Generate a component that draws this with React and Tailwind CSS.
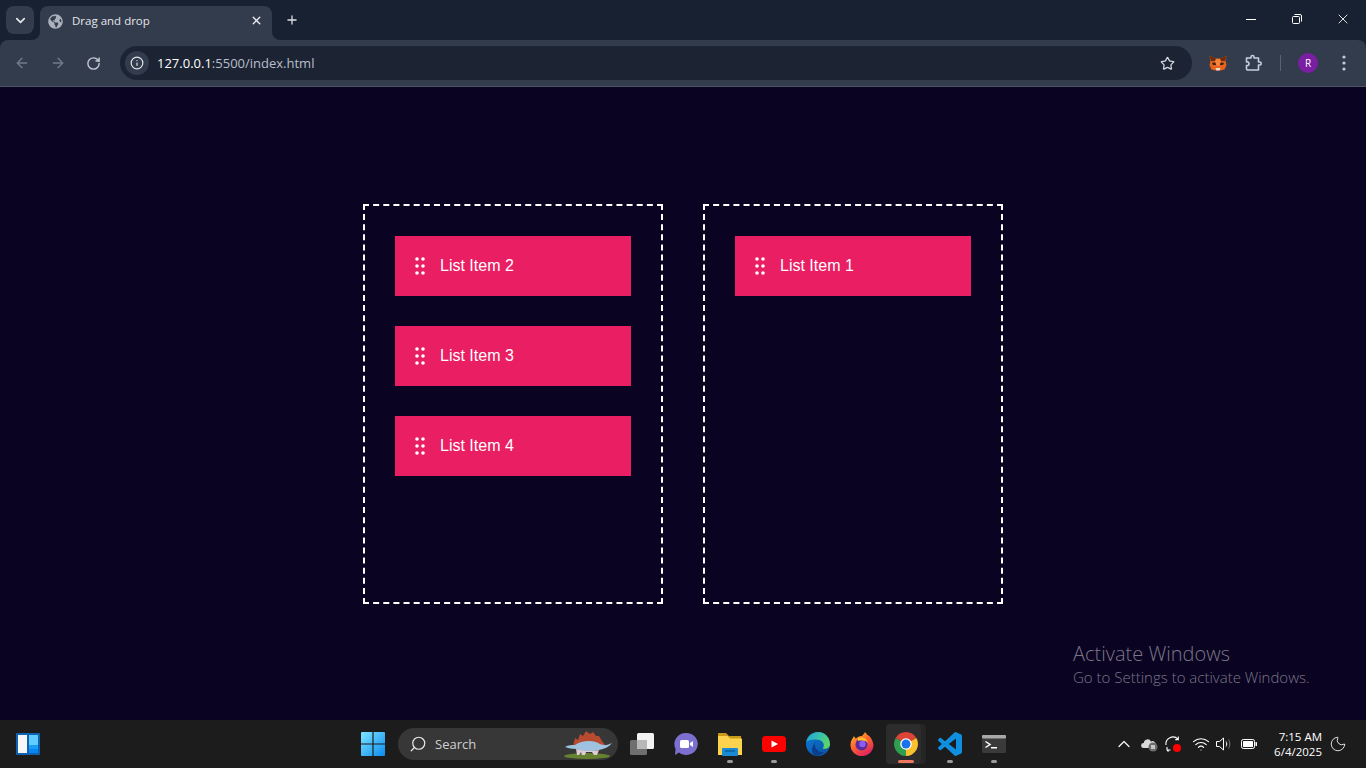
import React from "react";
import { ArrowLeft, ArrowRight, RotateCw, Info, Star, Plus, X, ChevronDown, ChevronUp, Search, Wifi, Moon } from "lucide-react";
import { FaGlobeAmericas } from "react-icons/fa";

const ui = "font-['Open_Sans','Noto_Sans',sans-serif]";

function Grip() {
  return (
    <svg width="10" height="18" viewBox="0 0 10 18" className="shrink-0" fill="#fff">
      {[2, 8].map((x) => [2, 9, 16].map((y) => <circle key={x + "-" + y} cx={x} cy={y} r="1.8" />))}
    </svg>
  );
}

function Item({ label }) {
  return (
    <div className="h-[60px] w-[236px] bg-[#e91e63] flex items-center pl-5 gap-[15px] text-white text-base font-['Liberation_Sans',Arial,sans-serif]">
      <Grip />
      <span>{label}</span>
    </div>
  );
}

function Box({ items }) {
  return (
    <div className="w-[300px] h-[400px] border-2 border-dashed border-white p-[30px] flex flex-col gap-[30px]">
      {items.map((t) => <Item key={t} label={t} />)}
    </div>
  );
}

function Fox() {
  return (
    <svg width="18" height="16" viewBox="0 0 18 16">
      <path d="M0.5 1 L7 3.5 H11 L17.5 1 L16.5 6 L17.5 10 L15.5 14.5 L11.5 15.5 H6.5 L2.5 14.5 L0.5 10 L1.5 6 Z" fill="#e8621c" />
      <path d="M0.5 1 L7 3.5 L6 6 L2 6 Z M17.5 1 L11 3.5 L12 6 L16 6 Z" fill="#6b2c12" />
      <path d="M3 8 L7 7 L7 10 L4 10 Z M15 8 L11 7 L11 10 L14 10 Z" fill="#3a2418" />
      <path d="M7 4 H11 L12 7 L10 11 H8 L6 7 Z" fill="#f5843a" />
      <path d="M6.5 13 H11.5 L10.5 15.5 H7.5 Z" fill="#e8dcd2" />
    </svg>
  );
}

function PuzzleIcon() {
  return (
    <svg width="18" height="18" viewBox="0 0 18 18" fill="none" stroke="#c5cedd" strokeWidth="1.6" strokeLinejoin="round">
      <path d="M1.5 4 H6 V3 A1.5 1.5 0 0 1 9 3 V4 H13.5 V8 H14.7 A1.5 1.5 0 0 1 14.7 11 H13.5 V16 H2.5 A1 1 0 0 1 1.5 15 V11.5 H3 A2 2 0 0 0 3 8 H1.5 Z" />
    </svg>
  );
}

function Restore() {
  return (
    <svg width="10" height="10" viewBox="0 0 10 10" fill="none" stroke="#fff" strokeWidth="1">
      <rect x="0.5" y="2.5" width="7" height="7" rx="1" />
      <path d="M2.5 0.5 H8 A1.5 1.5 0 0 1 9.5 2 V7.5" />
    </svg>
  );
}

function TabStrip() {
  return (
    <div className="h-10 bg-[#182131] flex items-start text-white relative">
      <div className="ml-[6px] mt-[6px] w-7 h-7 rounded-lg bg-[#333c4c] flex items-center justify-center">
        <ChevronDown size={15} strokeWidth={2.6} color="#e4e8ef" />
      </div>
      <div className={`relative ml-[6px] mt-[6px] w-[232px] h-[34px] bg-[#333c4c] rounded-t-lg flex items-center pl-[8px] pr-2 ${ui}`}>
        <svg width="8" height="8" viewBox="0 0 8 8" className="absolute -left-2 bottom-0"><path d="M8 0 V8 H0 A8 8 0 0 0 8 0 Z" fill="#333c4c" /></svg>
        <svg width="8" height="8" viewBox="0 0 8 8" className="absolute -right-2 bottom-0"><path d="M0 0 V8 H8 A8 8 0 0 1 0 0 Z" fill="#333c4c" /></svg>
        <FaGlobeAmericas size={15} color="#aab1bd" className="shrink-0 -mt-[4px]" />
        <span className="ml-[9px] text-[11.5px] text-[#e3e6eb] leading-none -mt-[4px]">Drag and drop</span>
        <X size={13} strokeWidth={2.6} color="#e8ebf0" className="ml-auto mr-[1px] -mt-[5px]" />
      </div>
      <div className="ml-[13px] mt-[13px]">
        <Plus size={14} strokeWidth={2.2} color="#dde1e8" />
      </div>
      <div className="ml-auto flex items-center h-10 -mt-[1px]">
        <div className="w-[46px] flex justify-center"><div className="w-[10px] h-px bg-white" /></div>
        <div className="w-[46px] flex justify-center"><Restore /></div>
        <div className="w-[46px] flex justify-center"><X size={16} strokeWidth={1.3} color="#fff" /></div>
      </div>
    </div>
  );
}

function Toolbar() {
  return (
    <div className="h-[47px] bg-[#182131]">
      <div className="h-[46px] bg-[#333c4c] rounded-t-lg flex items-center">
        <ArrowLeft size={16} strokeWidth={2} color="#737b89" className="ml-[14px]" />
        <ArrowRight size={16} strokeWidth={2} color="#737b89" className="ml-[20px]" />
        <RotateCw size={15} strokeWidth={2.2} color="#c5cad3" className="ml-[20px]" />
        <div className="ml-[19px] w-[1072px] h-[34px] rounded-full bg-[#1c2434] flex items-center pl-[5px] pr-[17px]">
          <div className="w-6 h-6 rounded-full bg-[#333c4c] flex items-center justify-center">
            <Info size={14} strokeWidth={2} color="#e3e6eb" />
          </div>
          <span className={`ml-2 text-[13px] leading-none ${ui}`}>
            <span className="text-white">127.0.0.1</span>
            <span className="text-[#b9bfca]">:5500/index.html</span>
          </span>
          <Star size={15} strokeWidth={2} color="#d5d9e0" className="ml-auto" />
        </div>
        <div className="ml-[17px]"><Fox /></div>
        <div className="ml-[18px]"><PuzzleIcon /></div>
        <div className="ml-[17px] w-px h-[16px] bg-[#5a6270]" />
        <div className={`ml-[17px] w-5 h-5 rounded-full bg-[#7b1fa2] flex items-center justify-center text-[10px] text-white ${ui}`}>R</div>
        <svg width="4" height="16" viewBox="0 0 4 16" fill="#c5cad3" className="ml-[24px]">
          <circle cx="2" cy="2" r="1.6" /><circle cx="2" cy="8" r="1.6" /><circle cx="2" cy="14" r="1.6" />
        </svg>
      </div>
      <div className="h-px bg-[#4d5463]" />
    </div>
  );
}

function Widgets() {
  return (
    <svg width="24" height="22" viewBox="0 0 24 22">
      <rect width="24" height="22" rx="1" fill="#0f62b0" />
      <rect x="2" y="2" width="9" height="18" fill="#f6f6f6" />
      <rect x="13" y="2" width="9" height="10" fill="#60cdff" />
      <rect x="13" y="12" width="9" height="4" fill="#1b9cf4" />
      <rect x="13" y="16" width="9" height="4" fill="#0a84f0" />
    </svg>
  );
}

function Start() {
  return (
    <svg width="24" height="24" viewBox="0 0 24 24">
      <defs>
        <linearGradient id="st" x1="0" y1="0" x2="1" y2="1">
          <stop offset="0" stopColor="#7fe4ff" /><stop offset="1" stopColor="#0a8cf0" />
        </linearGradient>
      </defs>
      <path d="M0 1 A1 1 0 0 1 1 0 H11.4 V11.4 H0 Z M12.6 0 H23 A1 1 0 0 1 24 1 V11.4 H12.6 Z M0 12.6 H11.4 V24 H1 A1 1 0 0 1 0 23 Z M12.6 12.6 H24 V23 A1 1 0 0 1 23 24 H12.6 Z" fill="url(#st)" />
    </svg>
  );
}

function Stego() {
  return (
    <svg width="52" height="30" viewBox="0 0 52 30">
      <ellipse cx="25" cy="26" rx="23" ry="3" fill="#66812f" />
      <path d="M11 16 L13 8 L16 10 L18 4 L21 6 L24 1 L28 4 L31 2 L34 6 L37 6 L40 11 L43 15 Z" fill="#b84a30" />
      <path d="M3 17 C6 15 10 15 13 15 C20 10 32 10 38 14 C42 16 46 15 50 13 C47 17 42 19 37 20 C30 22 20 22 14 19 C10 19 6 18 3 17 Z" fill="#9fc3de" />
      <path d="M14 19 C20 21 30 22 37 20 L35 25 H32 L30 22 H24 L23 25 H20 L19 22 L17 25 H15 Z" fill="#dfccd6" />
    </svg>
  );
}

function TaskView() {
  return (
    <svg width="24" height="22" viewBox="0 0 24 22">
      <rect x="0" y="7" width="17" height="15" rx="1.5" fill="#6f6f6f" />
      <rect x="7" y="0" width="17" height="16" rx="1.5" fill="#f2f2f2" />
      <rect x="7" y="7" width="10" height="9" fill="#b8b8b8" />
    </svg>
  );
}

function Meet() {
  return (
    <svg width="24" height="24" viewBox="0 0 24 24">
      <path d="M12 1 A11.5 11 0 1 1 5 20.5 L1 23 L1.6 17 A11.5 11 0 0 1 12 1 Z" fill="#7b6fd0" />
      <rect x="6" y="8" width="9" height="8" rx="1.5" fill="#fff" />
      <path d="M16 11 L19 9 V15 L16 13 Z" fill="#fff" />
    </svg>
  );
}

function Explorer() {
  return (
    <svg width="24" height="24" viewBox="0 0 24 24">
      <path d="M0 1.5 A1 1 0 0 1 1 1 H8 L11 4 H23 V8 H0 Z" fill="#c99a1a" />
      <path d="M0 4 H9.5 L12 6.5 H24 V23 H0 Z" fill="#fcd34d" />
      <rect x="4" y="16" width="16" height="8" rx="1" fill="#1a8ad4" />
      <rect x="7" y="18" width="10" height="2" fill="#0e6aa8" />
    </svg>
  );
}

function YouTube() {
  return (
    <svg width="24" height="16" viewBox="0 0 24 16">
      <rect width="24" height="16" rx="3.5" fill="#f00" />
      <path d="M9.5 4.5 L16 8 L9.5 11.5 Z" fill="#fff" />
    </svg>
  );
}

function Edge() {
  return (
    <svg width="24" height="24" viewBox="0 0 24 24">
      <defs>
        <linearGradient id="eg" x1="0" y1="0" x2="1" y2="0.4">
          <stop offset="0" stopColor="#1fa2d8" /><stop offset="0.55" stopColor="#35c1b0" /><stop offset="1" stopColor="#5ad36c" />
        </linearGradient>
        <linearGradient id="eb" x1="0" y1="0" x2="1" y2="1">
          <stop offset="0" stopColor="#0c7cd5" /><stop offset="1" stopColor="#0b4fa0" />
        </linearGradient>
      </defs>
      <circle cx="12" cy="12" r="12" fill="url(#eb)" />
      <path d="M0.3 10 C1.5 3.5 7 0 12 0 C19 0 24 5.5 24 12.5 C24 16 20 17.5 16.5 16.5 C19 14.5 18 9 13 8 C7 7 2.5 8 0.3 10 Z" fill="url(#eg)" />
      <path d="M9 12 C8.5 17 12.5 20.5 18 20 C15 23 11 24 8.5 23 C5 20.5 5.5 14 9 12 Z" fill="#0a3d8a" />
      <path d="M12 8.5 C9 9.5 7 13 9 18 C6.5 15 7.5 10 12 8.5 Z" fill="#0a3d8a" />
    </svg>
  );
}

function Firefox() {
  return (
    <svg width="24" height="24" viewBox="0 0 24 24">
      <defs>
        <linearGradient id="ff" x1="0" y1="0" x2="0.6" y2="1">
          <stop offset="0" stopColor="#ffbd2e" /><stop offset="0.5" stopColor="#ff6a2b" /><stop offset="1" stopColor="#e0245e" />
        </linearGradient>
      </defs>
      <path d="M4 4 C4.5 5 5 6 6 6.5 C8 4.5 10 4 12 4 C13 2.5 14.5 1.5 15 0 C16 1 16.5 2 17.5 3 C20 4 23 8 23.5 13 A11.5 11 0 1 1 0.7 11 C1 8 3 6 4 4 Z" fill="url(#ff)" />
      <circle cx="11.5" cy="12.5" r="6" fill="#5b2a9e" />
      <circle cx="12.5" cy="12" r="3.2" fill="#8b5cf6" />
      <path d="M8 6 C12 4.5 17 6 18 11 C16 8.5 12 8 8 9 Z" fill="#ffbd2e" />
    </svg>
  );
}

function Chrome() {
  return (
    <svg width="24" height="24" viewBox="0 0 24 24" className="relative">
      <path d="M12 12 L1.61 6 A12 12 0 0 1 22.39 6 Z" fill="#db4437" />
      <path d="M12 12 L22.39 6 A12 12 0 0 1 12 24 Z" fill="#fbc02d" />
      <path d="M12 12 L12 24 A12 12 0 0 1 1.61 6 Z" fill="#2e9e4f" />
      <circle cx="12" cy="12" r="5.8" fill="#fff" />
      <circle cx="12" cy="12" r="4.5" fill="#1a73e8" />
    </svg>
  );
}

function VSCode() {
  return (
    <svg width="24" height="24" viewBox="0 0 24 24">
      <path d="M23.15 2.587L18.21.21a1.494 1.494 0 0 0-1.705.29l-9.46 8.63-4.12-3.128a.999.999 0 0 0-1.276.057L.327 7.261A1 1 0 0 0 .326 8.74L3.899 12 .326 15.26a1 1 0 0 0 .001 1.479L1.65 17.94a.999.999 0 0 0 1.276.057l4.12-3.128 9.46 8.63a1.492 1.492 0 0 0 1.704.29l4.942-2.377A1.5 1.5 0 0 0 24 20.06V3.939a1.5 1.5 0 0 0-.85-1.352zm-5.146 14.861L10.826 12l7.178-5.448v10.896z" fill="#0f8fe0" />
    </svg>
  );
}

function Terminal() {
  return (
    <svg width="24" height="18" viewBox="0 0 24 18">
      <rect width="24" height="18" rx="1.5" fill="#3a3a3a" />
      <rect width="24" height="3.5" rx="1" fill="#a8a8a8" />
      <path d="M3.5 6.5 L8 9.5 L3.5 12.5" fill="none" stroke="#fff" strokeWidth="1.5" />
      <rect x="9" y="12" width="6" height="1.5" fill="#fff" />
    </svg>
  );
}

function Slot({ children, running }) {
  return (
    <div className="relative w-11 h-10 flex items-center justify-center">
      {children}
      {running && <div className="absolute bottom-[1px] left-1/2 -translate-x-1/2 h-[3px] w-[6px] rounded-full bg-[#9b9b9b]" />}
    </div>
  );
}

function Cloud() {
  return (
    <svg width="17" height="15" viewBox="0 0 17 15">
      <path d="M2.5 11 A2.5 2.5 0 0 1 2.8 6 A3.8 3.8 0 0 1 10 4.5 A3 3 0 0 1 13 10 L11 11 Z" fill="#d9d9d9" />
      <circle cx="12" cy="10" r="4.5" fill="#6c6c6c" />
      <rect x="10.4" y="8" width="1.2" height="4" fill="#fff" />
      <rect x="12.4" y="8" width="1.2" height="4" fill="#fff" />
    </svg>
  );
}

function Sync() {
  return (
    <svg width="17" height="17" viewBox="0 0 17 17" fill="none" stroke="#fff" strokeWidth="1.1">
      <path d="M1 9 A7 7 0 0 1 13 3.2" />
      <path d="M13.3 0.6 V3.6 H10.3" />
      <path d="M2 14 L3.5 15.5 M2 14 H5.5 M2 14 V11" />
      <circle cx="12" cy="12" r="4" fill="#f00" stroke="none" />
    </svg>
  );
}

function Volume() {
  return (
    <svg width="16" height="14" viewBox="0 0 16 14" fill="none" stroke="#fff" strokeWidth="1">
      <path d="M0.5 4.5 H3.5 L7.5 1 V13 L3.5 9.5 H0.5 Z" strokeLinejoin="round" />
      <path d="M10 4.5 C11 6 11 8 10 9.5" />
      <path d="M12.5 2.5 C14.3 5 14.3 9 12.5 11.5" stroke="#777" />
    </svg>
  );
}

function Battery() {
  return (
    <svg width="16" height="10" viewBox="0 0 16 10">
      <rect x="0.5" y="0.5" width="13" height="9" rx="1.8" fill="none" stroke="#fff" />
      <rect x="2" y="2" width="10" height="6" rx="0.6" fill="#fff" />
      <rect x="14.5" y="3" width="1.5" height="4" rx="0.6" fill="#fff" />
    </svg>
  );
}

function Taskbar() {
  return (
    <div className={`h-12 bg-[#1c1c1c] flex items-center text-white relative ${ui}`}>
      <div className="ml-4"><Widgets /></div>
      <div className="ml-[321px]"><Start /></div>
      <div className="ml-[13px] w-[220px] h-8 rounded-full bg-[#373737] flex items-center pl-[11px] relative overflow-hidden">
        <Search size={18} strokeWidth={1.6} color="#e8e8e8" className="-scale-x-100" />
        <span className="ml-[8px] text-[13px] text-[#cfcfcf] mt-[1px]">Search</span>
        <div className="absolute right-[4px] bottom-0"><Stego /></div>
      </div>
      <div className="ml-[12px]"><TaskView /></div>
      <div className="ml-[10px] flex items-center">
        <Slot><Meet /></Slot>
        <Slot running><Explorer /></Slot>
        <Slot running><YouTube /></Slot>
        <Slot><Edge /></Slot>
        <Slot><Firefox /></Slot>
        <div className="relative w-11 h-10 flex items-center justify-center">
          <div className="absolute inset-y-0 left-[2px] w-10 rounded bg-[#252525]" />
          <div className="absolute inset-y-0 left-[2px] w-[35px] rounded bg-[#2c2c2c]" />
          <Chrome />
          <div className="absolute bottom-[1px] left-1/2 -translate-x-1/2 h-[3px] w-4 rounded-full bg-[#f0775f]" />
        </div>
        <Slot running><VSCode /></Slot>
        <Slot running><Terminal /></Slot>
      </div>
      <div className="ml-auto flex items-center">
        <ChevronUp size={20} strokeWidth={1.6} color="#f2f2f2" />
        <div className="ml-[7px]"><Cloud /></div>
        <div className="ml-[7px]"><Sync /></div>
        <div className="ml-[10px]"><Wifi size={18} strokeWidth={1.5} color="#fff" /></div>
        <div className="ml-[6px]"><Volume /></div>
        <div className="ml-[9px]"><Battery /></div>
        <div className="ml-[9px] w-[56px] text-right text-[11.5px] leading-[15px] text-white">
          <div>7:15 AM</div>
          <div>6/4/2025</div>
        </div>
        <Moon size={18} strokeWidth={1.2} color="#f2f2f2" className="ml-[7px] mr-[19px]" />
      </div>
    </div>
  );
}

export default function App() {
  return (
    <div className="w-full h-screen flex flex-col overflow-hidden bg-[#0b0322]">
      <TabStrip />
      <Toolbar />
      <main className="relative flex-1 flex justify-center gap-10 pt-[117px]">
        <Box items={["List Item 2", "List Item 3", "List Item 4"]} />
        <Box items={["List Item 1"]} />
        <div className={`absolute left-[1073px] top-[554px] text-[#7a7787] font-light ${ui}`}>
          <div className="text-[20px] leading-[26px]">Activate Windows</div>
          <div className="text-[15px] leading-[20px]">Go to Settings to activate Windows.</div>
        </div>
      </main>
      <Taskbar />
    </div>
  );
}
